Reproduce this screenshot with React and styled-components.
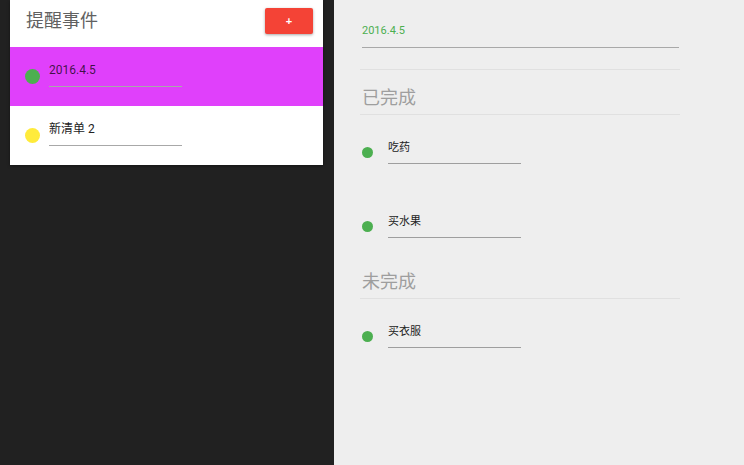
import React from 'react'
import styled, { createGlobalStyle } from "styled-components";

const GlobalStyle = createGlobalStyle`
  html, body, #root {
    margin: 0;
    height: 100%;
  }
  body {
    font-family: Roboto, "Noto Sans CJK SC", sans-serif;
  }
`;

const Page = styled.div`
  display: flex;
  height: 100vh;
  overflow: hidden;
`;

const Sidebar = styled.div`
  width: 334px;
  flex-shrink: 0;
  background: #212121;
  padding: 0 11px 0 10px;
  box-sizing: border-box;
`;

const Card = styled.div`
  background: #fff;
  box-shadow: 0 1px 3px rgba(0, 0, 0, 0.4);
`;

const CardHeader = styled.div`
  height: 47px;
  display: flex;
  align-items: flex-start;
  justify-content: space-between;
  padding: 0 10px 0 16px;
`;

const Title = styled.div`
  margin-top: 10px;
  font-size: 18px;
  line-height: 22px;
  color: #616161;
`;

const AddButton = styled.button`
  margin-top: 8px;
  width: 48px;
  height: 26px;
  border: none;
  border-radius: 2px;
  background: #f44336;
  color: #fff;
  font-size: 11px;
  font-weight: bold;
  box-shadow: 0 1px 3px rgba(0, 0, 0, 0.35);
  padding: 0;
`;

const ListRow = styled.div`
  height: 59px;
  display: flex;
  align-items: flex-start;
  padding-left: 15px;
  background: ${(p) => (p.active ? "#e040fb" : "#fff")};
`;

const Dot = styled.span`
  width: ${(p) => p.size}px;
  height: ${(p) => p.size}px;
  border-radius: 50%;
  background: ${(p) => p.color};
  flex-shrink: 0;
  margin-top: ${(p) => p.top}px;
  margin-right: ${(p) => p.gap}px;
`;

const Field = styled.div`
  width: ${(p) => p.width}px;
  margin-top: ${(p) => p.top || 0}px;
  padding-bottom: ${(p) => p.pad}px;
  border-bottom: 1px solid ${(p) => p.line || "#a8a8a8"};
  font-size: ${(p) => p.size}px;
  line-height: ${(p) => p.lh}px;
  color: ${(p) => p.color || "#222"};
`;

const Main = styled.div`
  flex: 1;
  background: #eeeeee;
  padding: 24px 0 0 28px;
  box-sizing: border-box;
`;

const Column = styled.div`
  width: 318px;
`;

const Divider = styled.div`
  height: 1px;
  margin-left: -2px;
  background: #e0e0e0;
  margin-top: ${(p) => p.top}px;
`;

const SectionTitle = styled.div`
  margin-top: ${(p) => p.top}px;
  margin-left: -2px;
  padding: 0 0 5px 2px;
  border-bottom: 1px solid #e0e0e0;
  font-size: 18px;
  line-height: 22px;
  color: #9e9e9e;
`;

const Item = styled.div`
  display: flex;
  align-items: flex-start;
  padding: 26px 0 25px;
`;

const lists = [
  { name: "2016.4.5", color: "#4caf50", active: true },
  { name: "新清单 2", color: "#ffeb3b", active: false },
];

const done = ["吃药", "买水果"];
const todo = ["买衣服"];

const TodoItem = ({ text }) => (
  <Item>
    <Dot size={11} color="#4caf50" top={6} gap={15} />
    <Field width={133} pad={8} size={11} lh={14} line="#9e9e9e">
      {text}
    </Field>
  </Item>
);

const App = () => {
  return (
    <Page>
      <GlobalStyle />
      <Sidebar>
        <Card>
          <CardHeader>
            <Title>提醒事件</Title>
            <AddButton>+</AddButton>
          </CardHeader>
          {lists.map((l) => (
            <ListRow key={l.name} active={l.active}>
              <Dot size={15} color={l.color} top={22} gap={9} />
              <Field
                width={133}
                top={15}
                pad={8}
                size={12}
                lh={16}
                line="#a8a8a8"
                color={l.active ? "rgba(0,0,0,0.72)" : "#222"}
              >
                {l.name}
              </Field>
            </ListRow>
          ))}
        </Card>
      </Sidebar>
      <Main>
        <Column>
          <Field width={317} pad={9} size={11} lh={14} color="#4caf50" line="#a8a8a8">
            2016.4.5
          </Field>
          <Divider top={21} />
          <SectionTitle top={17}>已完成</SectionTitle>
          {done.map((t) => (
            <TodoItem key={t} text={t} />
          ))}
          <SectionTitle top={8}>未完成</SectionTitle>
          {todo.map((t) => (
            <TodoItem key={t} text={t} />
          ))}
        </Column>
      </Main>
    </Page>
  )
}

export default App
